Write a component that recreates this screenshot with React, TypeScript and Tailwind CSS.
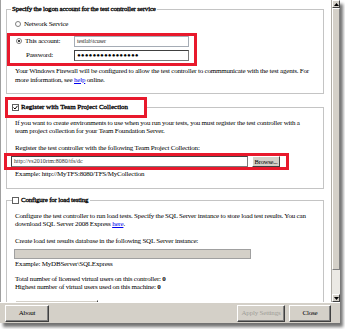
import React from 'react';

// Classic Windows dialog: test controller configuration, with red annotation boxes
const txt =
  "font-['Liberation_Serif',serif] text-[7px] leading-[8.5px] tracking-[-0.2px] text-black whitespace-nowrap";
const heavy = '[-webkit-text-stroke:0.3px_black]';

const Radio: React.FC<{ checked?: boolean }> = ({ checked }) => (
  <span className="w-[6px] h-[6px] rounded-full border border-[#808080] bg-white flex items-center justify-center shrink-0">
    {checked && <span className="w-[2px] h-[2px] rounded-full bg-black" />}
  </span>
);

const Check: React.FC<{ checked?: boolean }> = ({ checked }) => (
  <span className="w-[7px] h-[7px] border border-[#606060] bg-white flex items-center justify-center shrink-0">
    {checked && (
      <svg width="5" height="5" viewBox="0 0 5 5">
        <path d="M0.5 2.5 L2 4 L4.5 0.8" stroke="black" strokeWidth="1" fill="none" />
      </svg>
    )}
  </span>
);

const WinButton: React.FC<{ label: string; w: string; disabled?: boolean }> = ({ label, w, disabled }) => (
  <div
    className={`${w} h-[17px] bg-[#d4d0c8] border border-t-white border-l-white border-r-[#404040] border-b-[#404040] shadow-[inset_-1px_-1px_0_#808080] flex items-center justify-center font-['Liberation_Serif',serif] text-[7px] tracking-[-0.2px] ${
      disabled ? 'text-[#a09e98]' : 'text-black'
    }`}
  >
    {label}
  </div>
);

const App: React.FC = () => {
  return (
    <div className="w-[345px] h-[329px] bg-white overflow-hidden">
      <div className="w-[340px] h-[323px] flex flex-col bg-[#d4d0c8] shadow-[3px_4px_3px_rgba(0,0,0,0.55)]">
        {/* Scrolling settings area */}
        <div className="flex h-[302px]">
          <div className="flex-1 bg-white overflow-hidden border-l border-[#a0a0a0] pl-[5px] pr-[7px] pt-[5px]">
            {/* Logon account */}
            <fieldset className="w-[318px] border border-[#c4c4c4] pb-[9px]">
              <legend className={`${txt} ${heavy} ml-[4px] px-[1px] leading-[9px]`}>
                Specify the logon account for the test controller service
              </legend>
              <div className={`${txt} flex items-center gap-[3px] pl-[8px] mt-[6px]`}>
                <Radio />
                <span>Network Service</span>
              </div>
              <div className="w-[190px] border-[3px] border-[#e8192c] mt-[4px] pl-[6px] pb-[2px] flex flex-col gap-[3px]">
                <div className={`${txt} flex items-center`}>
                  <div className="w-[58px] flex items-center gap-[3px]">
                    <Radio checked />
                    <span>This account:</span>
                  </div>
                  <div className="w-[115px] h-[11px] border border-[#a5acb5] bg-white flex items-center pl-[2px] text-[6px] text-[#333]">
                    testlab\tcuser
                  </div>
                </div>
                <div className={`${txt} flex items-center`}>
                  <div className="w-[58px] pl-[10px]">Password:</div>
                  <div className="w-[115px] h-[11px] border border-[#7a7a7a] border-t-[#404040] border-l-[#404040] bg-white flex items-center pl-[2px] overflow-hidden font-['Liberation_Serif',serif] text-[11px] tracking-[0px] leading-none">
                    ••••••••••••••••
                  </div>
                </div>
              </div>
              <p className={`${txt} pl-[8px] mt-[1.5px]`}>
                Your Windows Firewall will be configured to allow the test controller to commmunicate with the test agents. For
                <br />
                more information, see <span className="text-[#0000ee] underline">help</span> online.
              </p>
            </fieldset>

            {/* Team project collection */}
            <fieldset className="w-[318px] border border-[#c4c4c4] mt-[3px] pb-[10px]">
              <legend className="-ml-[2px] w-[142px] border-[3px] border-[#e8192c] h-[21px] pl-[4px] flex items-center gap-[2px]">
                <Check checked />
                <span className={`${txt} ${heavy} tracking-[0px]`}>Register with Team Project Collection</span>
              </legend>
              <p className={`${txt} pl-[8px] mt-[0.5px]`}>
                If you want to create environments to use when you run your tests, you must register the test controller with a
                <br />
                team project collection for your Team Foundation Server.
              </p>
              <p className={`${txt} pl-[8px] mt-[8px]`}>
                Register the test controller with the following Team Project Collection:
              </p>
              <div className="-ml-[3px] w-[285px] border-[3px] border-[#e8192c] mt-[1px] pl-[4px] flex items-center gap-[4px]">
                <div className="w-[237px] h-[11px] border border-[#7a7a7a] border-t-[#404040] border-l-[#404040] bg-white flex items-center pl-[2px] font-['Liberation_Serif',serif] text-[6px] text-[#333]">
                  http://vs2010rtm:8080/tfs/dc
                </div>
                <div className="w-[28px] h-[11px] bg-[#d4d0c8] border border-t-white border-l-white border-r-[#404040] border-b-[#404040] flex items-center justify-center font-['Liberation_Serif',serif] text-[6.5px] tracking-[-0.2px]">
                  Browse...
                </div>
              </div>
              <p className={`${txt} pl-[8px] -mt-[0.5px]`}>Example: http://MyTFS:8080/TFS/MyCollection</p>
            </fieldset>

            {/* Load testing */}
            <fieldset className="w-[318px] border border-[#c4c4c4] mt-[7px] pb-[20px]">
              <legend className="ml-[5px] pr-[2px] h-[9px] flex items-center gap-[2px]">
                <Check />
                <span className={`${txt} ${heavy}`}>Configure for load testing</span>
              </legend>
              <p className={`${txt} pl-[8px] mt-[6.5px]`}>
                Configure the test controller to run load tests. Specify the SQL Server instance to store load test results. You can
                <br />
                download SQL Server 2008 Express <span className="text-[#0000ee] underline">here</span>.
              </p>
              <p className={`${txt} pl-[8px] mt-[8px]`}>
                Create load test results database in the following SQL Server instance:
              </p>
              <div className="ml-[7px] mt-[4px] w-[237px] h-[10px] bg-[#d4d0c8] border border-[#a0a0a0]" />
              <p className={`${txt} pl-[8px] mt-[0.5px]`}>Example: MyDBServer\SQLExpress</p>
              <p className={`${txt} pl-[8px] mt-[6.5px]`}>
                Total number of licensed virtual users on this controller: <b>0</b>
                <br />
                Highest number of virtual users used on this machine: <b>0</b>
              </p>
              <div className="ml-[8px] mt-[8.5px] w-[83px] h-[16px] bg-[#d4d0c8] border border-t-white border-l-white border-r-[#404040] border-b-[#404040]" />
            </fieldset>
          </div>

          {/* Vertical scrollbar */}
          <div className="w-[9px] flex flex-col bg-[#d4d0c8] border-l border-[#b0ada6]">
            <div className="h-[8px] flex items-center justify-center border border-t-white border-l-white border-r-[#404040] border-b-[#404040]">
              <svg width="5" height="3" viewBox="0 0 5 3">
                <path d="M0 3 L2.5 0 L5 3 Z" fill="black" />
              </svg>
            </div>
            <div className="h-[262px] border border-t-white border-l-white border-r-[#808080] border-b-[#808080]" />
            <div className="flex-1 bg-[#ebe9e4]" />
            <div className="h-[8px] flex items-center justify-center border border-t-white border-l-white border-r-[#404040] border-b-[#404040]">
              <svg width="5" height="3" viewBox="0 0 5 3">
                <path d="M0 0 L2.5 3 L5 0 Z" fill="black" />
              </svg>
            </div>
          </div>
        </div>

        {/* Dialog buttons */}
        <div className="flex-1 flex items-start pt-[2px] pl-[5px] pr-[9px] border-t border-[#ffffff]">
          <WinButton label="About" w="w-[44px]" />
          <div className="flex-1" />
          <WinButton label="Apply Settings" w="w-[48px]" disabled />
          <div className="w-[4px]" />
          <WinButton label="Close" w="w-[42px]" />
        </div>
      </div>
    </div>
  );
};

export default App;
